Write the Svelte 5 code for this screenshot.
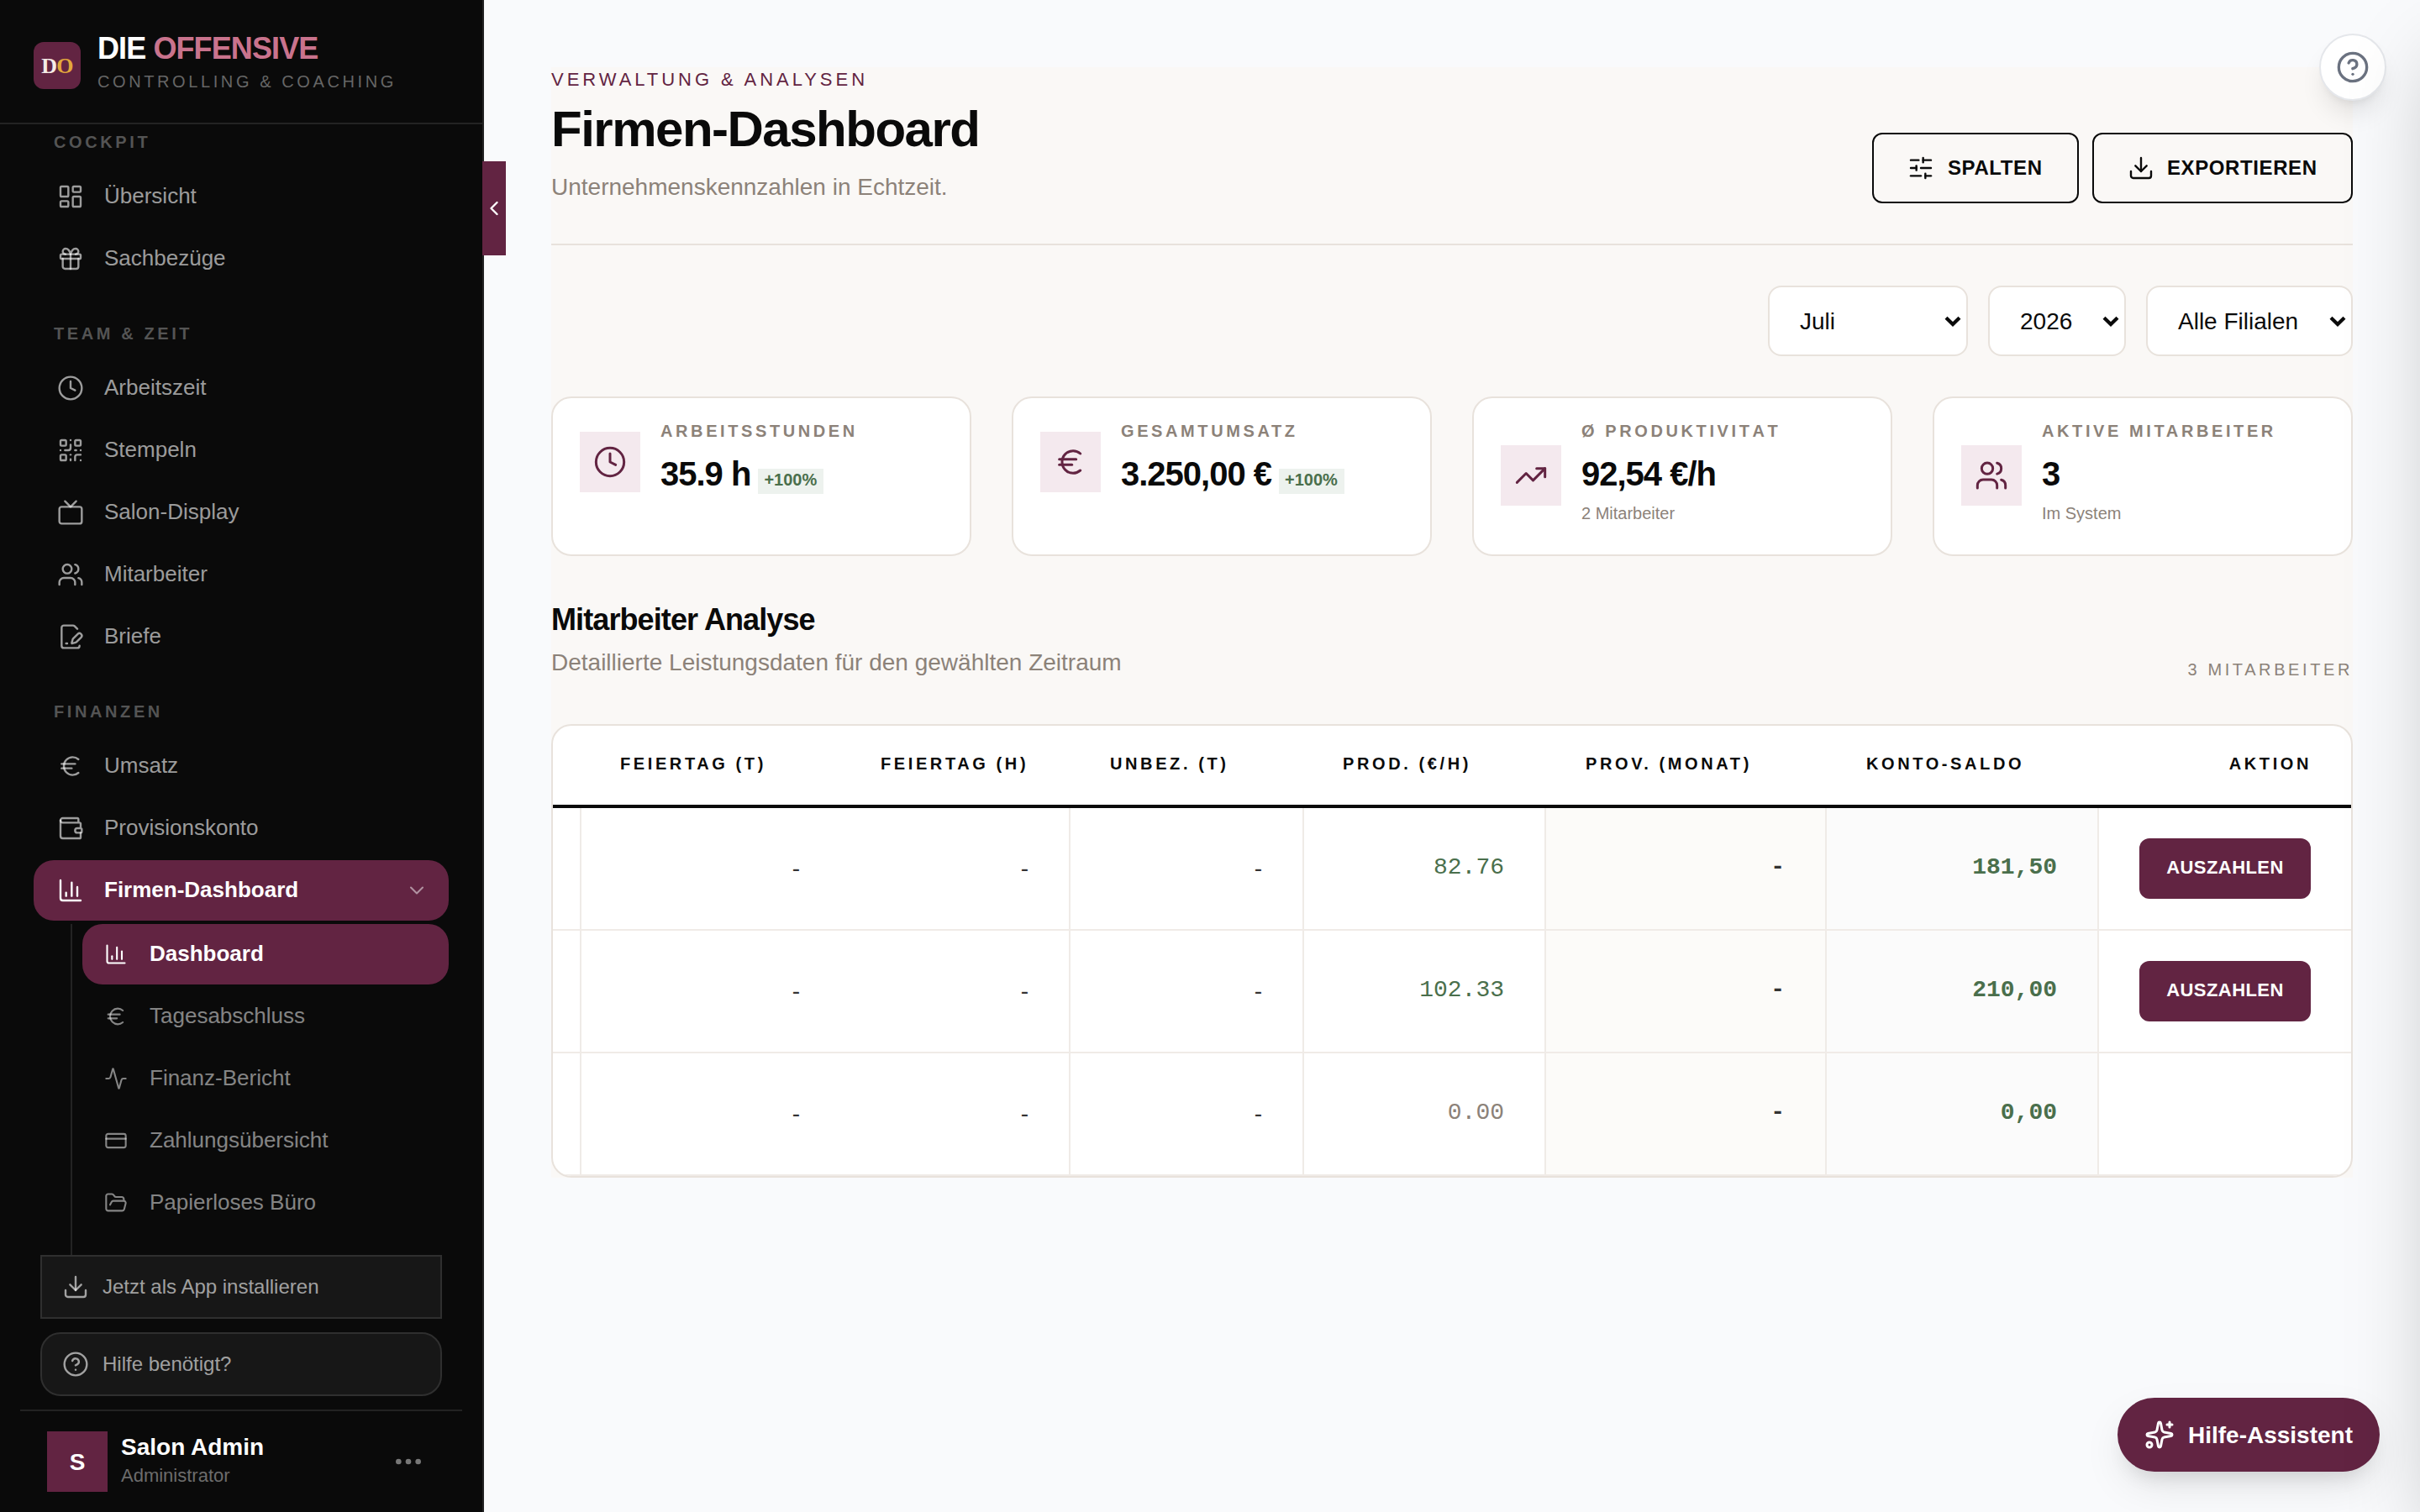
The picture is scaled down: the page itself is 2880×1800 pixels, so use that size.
<script>
  const icons = {
    dashboard: '<rect width="7" height="9" x="3" y="3" rx="1"/><rect width="7" height="5" x="14" y="3" rx="1"/><rect width="7" height="9" x="14" y="12" rx="1"/><rect width="7" height="5" x="3" y="16" rx="1"/>',
    gift: '<rect x="3" y="8" width="18" height="4" rx="1"/><path d="M12 8v13"/><path d="M19 12v7a2 2 0 0 1-2 2H7a2 2 0 0 1-2-2v-7"/><path d="M7.5 8a2.5 2.5 0 0 1 0-5A4.8 8 0 0 1 12 8a4.8 8 0 0 1 4.5-5 2.5 2.5 0 0 1 0 5"/>',
    clock: '<circle cx="12" cy="12" r="10"/><path d="M12 6v6l4 2"/>',
    qr: '<rect width="5" height="5" x="3" y="3" rx="1"/><rect width="5" height="5" x="16" y="3" rx="1"/><rect width="5" height="5" x="3" y="16" rx="1"/><path d="M21 16h-3a2 2 0 0 0-2 2v3"/><path d="M21 21v.01"/><path d="M12 7v3a2 2 0 0 1-2 2H7"/><path d="M3 12h.01"/><path d="M12 3h.01"/><path d="M12 16v.01"/><path d="M16 12h1"/><path d="M21 12v.01"/><path d="M12 21v-1"/>',
    tv: '<rect width="20" height="15" x="2" y="7" rx="2"/><path d="m17 2-5 5-5-5"/>',
    users: '<path d="M16 21v-2a4 4 0 0 0-4-4H6a4 4 0 0 0-4 4v2"/><path d="M16 3.128a4 4 0 0 1 0 7.744"/><path d="M22 21v-2a4 4 0 0 0-3-3.87"/><circle cx="9" cy="7" r="4"/>',
    letter: '<path d="m18 5-2.414-2.414A2 2 0 0 0 14.172 2H6a2 2 0 0 0-2 2v16a2 2 0 0 0 2 2h12a2 2 0 0 0 2-2"/><path d="M21.378 12.626a1 1 0 0 0-3.004-3.004l-4.01 4.012a2 2 0 0 0-.506.854l-.837 2.87a.5.5 0 0 0 .62.62l2.87-.837a2 2 0 0 0 .854-.506z"/><path d="M8 18h1"/>',
    euro: '<path d="M4 10h12"/><path d="M4 14h9"/><path d="M19 6a7.7 7.7 0 0 0-5.2-2A7.9 7.9 0 0 0 6 12c0 4.4 3.5 8 7.8 8 2 0 3.8-.8 5.2-2"/>',
    wallet: '<path d="M19 7V4a1 1 0 0 0-1-1H5a2 2 0 0 0 0 4h15a1 1 0 0 1 1 1v4h-3a2 2 0 0 0 0 4h3a1 1 0 0 0 1-1v-2a1 1 0 0 0-1-1"/><path d="M3 5v14a2 2 0 0 0 2 2h15a1 1 0 0 0 1-1v-4"/>',
    chart: '<path d="M3 3v16a2 2 0 0 0 2 2h16"/><path d="M18 17V9"/><path d="M13 17V5"/><path d="M8 17v-3"/>',
    activity: '<path d="M22 12h-2.48a2 2 0 0 0-1.93 1.46l-2.35 8.36a.25.25 0 0 1-.48 0L9.24 2.18a.25.25 0 0 0-.48 0l-2.35 8.36A2 2 0 0 1 4.49 12H2"/>',
    card: '<rect width="20" height="14" x="2" y="5" rx="2"/><path d="M2 10h20"/>',
    folder: '<path d="m6 14 1.5-2.9A2 2 0 0 1 9.24 10H20a2 2 0 0 1 1.94 2.5l-1.54 6a2 2 0 0 1-1.95 1.5H4a2 2 0 0 1-2-2V5a2 2 0 0 1 2-2h3.9a2 2 0 0 1 1.69.9l.81 1.2a2 2 0 0 0 1.67.9H18a2 2 0 0 1 2 2v2"/>',
    download: '<path d="M12 15V3"/><path d="M21 15v4a2 2 0 0 1-2 2H5a2 2 0 0 1-2-2v-4"/><path d="m7 10 5 5 5-5"/>',
    help: '<circle cx="12" cy="12" r="10"/><path d="M9.09 9a3 3 0 0 1 5.83 1c0 2-3 3-3 3"/><path d="M12 17h.01"/>',
    dots: '<circle cx="12" cy="12" r="1"/><circle cx="19" cy="12" r="1"/><circle cx="5" cy="12" r="1"/>',
    sliders: '<path d="M10 5H3"/><path d="M12 19H3"/><path d="M14 3v4"/><path d="M16 17v4"/><path d="M21 12h-9"/><path d="M21 19h-5"/><path d="M21 5h-7"/><path d="M8 10v4"/><path d="M8 12H3"/>',
    trend: '<path d="M16 7h6v6"/><path d="m22 7-8.5 8.5-5-5L2 17"/>',
    sparkles: '<path d="M11.017 2.814a1 1 0 0 1 1.966 0l1.051 5.558a2 2 0 0 0 1.594 1.594l5.558 1.051a1 1 0 0 1 0 1.966l-5.558 1.051a2 2 0 0 0-1.594 1.594l-1.051 5.558a1 1 0 0 1-1.966 0l-1.051-5.558a2 2 0 0 0-1.594-1.594l-5.558-1.051a1 1 0 0 1 0-1.966l5.558-1.051a2 2 0 0 0 1.594-1.594z"/><path d="M20 2v4"/><path d="M22 4h-4"/><circle cx="4" cy="20" r="2"/>',
    left: '<path d="m15 18-6-6 6-6"/>',
    down: '<path d="m6 9 6 6 6-6"/>'
  };

  const sections = [
    { title: 'COCKPIT', items: [['dashboard', 'Übersicht'], ['gift', 'Sachbezüge']] },
    {
      title: 'TEAM & ZEIT',
      items: [['clock', 'Arbeitszeit'], ['qr', 'Stempeln'], ['tv', 'Salon-Display'], ['users', 'Mitarbeiter'], ['letter', 'Briefe']]
    },
    { title: 'FINANZEN', items: [['euro', 'Umsatz'], ['wallet', 'Provisionskonto'], ['chart', 'Firmen-Dashboard', true]] }
  ];

  const subItems = [
    ['chart', 'Dashboard', true],
    ['euro', 'Tagesabschluss'],
    ['activity', 'Finanz-Bericht'],
    ['card', 'Zahlungsübersicht'],
    ['folder', 'Papierloses Büro']
  ];

  const filters = [['Juli', 'month'], ['2026', 'year'], ['Alle Filialen', 'branch']];

  const kpis = [
    { icon: 'clock', label: 'ARBEITSSTUNDEN', value: '35.9 h', badge: '+100%' },
    { icon: 'euro', label: 'GESAMTUMSATZ', value: '3.250,00 €', badge: '+100%' },
    { icon: 'trend', label: 'Ø PRODUKTIVITAT', value: '92,54 €/h', note: '2 Mitarbeiter', loose: true },
    { icon: 'users', label: 'AKTIVE MITARBEITER', value: '3', note: 'Im System' }
  ];

  const columns = ['', 'FEIERTAG (T)', 'FEIERTAG (H)', 'UNBEZ. (T)', 'PROD. (€/H)', 'PROV. (MONAT)', 'KONTO-SALDO', 'AKTION'];

  const rows = [
    { prod: '82.76', saldo: '181,50', pay: true },
    { prod: '102.33', saldo: '210,00', pay: true },
    { prod: '0.00', saldo: '0,00', pay: false }
  ];
</script>

{#snippet icon(name, size, stroke = 1.8)}
  <svg width={size} height={size} viewBox="0 0 24 24" fill="none" stroke="currentColor" stroke-width={stroke} stroke-linecap="round" stroke-linejoin="round" aria-hidden="true">{@html icons[name]}</svg>
{/snippet}

<div class="app">
  <aside class="sidebar">
    <div class="brand">
      <div class="logo"><span>D</span><span class="gold">O</span></div>
      <div class="brand-text">
        <div class="brand-name">DIE <span>OFFENSIVE</span></div>
        <div class="brand-sub">CONTROLLING &amp; COACHING</div>
      </div>
    </div>

    <nav class="nav">
      {#each sections as section}
        <div class="nav-title">{section.title}</div>
        <div class="nav-list">
          {#each section.items as [name, label, active]}
            <a class="nav-item" class:active>
              {@render icon(name, 32)}
              <span>{label}</span>
              {#if active}<i class="chev">{@render icon('down', 28)}</i>{/if}
            </a>
          {/each}
        </div>
      {/each}
      <div class="sub">
        {#each subItems as [name, label, active]}
          <a class="nav-item small" class:active>
            {@render icon(name, 28)}
            <span>{label}</span>
          </a>
        {/each}
      </div>
    </nav>

    <div class="side-foot">
      <button class="side-btn">{@render icon('download', 32)}<span>Jetzt als App installieren</span></button>
      <button class="side-btn round">{@render icon('help', 32)}<span>Hilfe benötigt?</span></button>
    </div>
    <div class="user">
      <div class="avatar">S</div>
      <div class="user-text">
        <div class="user-name">Salon Admin</div>
        <div class="user-role">Administrator</div>
      </div>
      <i class="more">{@render icon('dots', 40, 2)}</i>
    </div>
    <button class="collapse" aria-label="Einklappen">{@render icon('left', 28, 2)}</button>
  </aside>

  <main class="main">
    <div class="page">
      <header class="head">
        <div class="head-text">
          <div class="eyebrow">VERWALTUNG &amp; ANALYSEN</div>
          <h1>Firmen-Dashboard</h1>
          <p>Unternehmenskennzahlen in Echtzeit.</p>
        </div>
        <div class="actions">
          <button class="btn columns">{@render icon('sliders', 32)}<span>SPALTEN</span></button>
          <button class="btn export">{@render icon('download', 32)}<span>EXPORTIEREN</span></button>
        </div>
      </header>

      <div class="filters">
        {#each filters as [label, kind]}
          <div class="select {kind}">
            <span>{label}</span>
            <svg width="20" height="13" viewBox="0 0 20 13" fill="none" stroke="#0a0a0a" stroke-width="4.2"><path d="M2 2.2 10 10l8-7.8" /></svg>
          </div>
        {/each}
      </div>

      <div class="kpis">
        {#each kpis as k}
          <div class="kpi">
            <div class="kpi-inner">
              <div class="kpi-icon">{@render icon(k.icon, 40)}</div>
              <div class="kpi-body">
                <div class="kpi-label" class:loose={k.loose}>{k.label}</div>
                <div class="kpi-value"><span>{k.value}</span>{#if k.badge}<em>{k.badge}</em>{/if}</div>
                {#if k.note}<div class="kpi-note">{k.note}</div>{/if}
              </div>
            </div>
          </div>
        {/each}
      </div>

      <div class="section-head">
        <div>
          <h2>Mitarbeiter Analyse</h2>
          <p>Detaillierte Leistungsdaten für den gewählten Zeitraum</p>
        </div>
        <div class="count">3 MITARBEITER</div>
      </div>

      <div class="table">
        <div class="tr th">
          {#each columns as c}<div>{c}</div>{/each}
        </div>
        {#each rows as r}
          <div class="tr td">
            <div></div>
            <div class="line">-</div>
            <div>-</div>
            <div class="line">-</div>
            <div class="line mono" class:green={r.pay} class:zero={!r.pay}>{r.prod}</div>
            <div class="line mono bold prov">-</div>
            <div class="line mono bold green saldo">{r.saldo}</div>
            <div class="line action">{#if r.pay}<button class="pay">AUSZAHLEN</button>{/if}</div>
          </div>
        {/each}
      </div>
    </div>
  </main>

  <button class="help-fab" aria-label="Hilfe">{@render icon('help', 40, 2)}</button>
  <button class="assistant">{@render icon('sparkles', 36, 2)}<span>Hilfe-Assistent</span></button>
  <div class="drawer-shadow"></div>
</div>

<style>
  :global(body) {
    margin: 0;
    background: #f9fafc;
  }
  .app,
  .app * {
    box-sizing: border-box;
  }
  .app {
    position: relative;
    display: flex;
    width: 2880px;
    height: 1800px;
    overflow: hidden;
    background: #f9fafc;
    font-family: 'Liberation Sans', Arial, sans-serif;
    color: #0a0a0a;
  }
  button {
    font: inherit;
    margin: 0;
    padding: 0;
    border: 0;
    cursor: pointer;
  }
  svg {
    display: block;
    flex: none;
  }
  h1,
  h2,
  p {
    margin: 0;
  }

  /* Sidebar */
  .sidebar {
    position: relative;
    display: flex;
    flex-direction: column;
    flex: none;
    width: 576px;
    height: 1800px;
    background: #0a0a0a;
    border-right: 2px solid #232323;
  }
  .brand {
    display: flex;
    align-items: flex-start;
    gap: 20px;
    height: 148px;
    padding: 37px 40px 0;
    border-bottom: 2px solid #232323;
  }
  .logo {
    display: flex;
    align-items: center;
    justify-content: center;
    width: 56px;
    height: 56px;
    margin-top: 13px;
    padding-top: 1px;
    border-radius: 12px;
    background: #622442;
    color: #f5ebe6;
    font: bold 26px/30px 'Liberation Serif', serif;
    letter-spacing: -0.8px;
  }
  .gold {
    color: #e2a83c;
  }
  .brand-name {
    font-size: 36px;
    line-height: 41px;
    font-weight: 700;
    letter-spacing: -0.025em;
    color: #fff;
  }
  .brand-name span {
    color: #c9738d;
  }
  .brand-sub {
    margin-top: 8px;
    font-size: 20px;
    line-height: 22px;
    letter-spacing: 0.18em;
    color: #666;
    white-space: nowrap;
  }
  .nav {
    flex: 1;
    min-height: 0;
    overflow: hidden;
    padding: 10px 40px 0;
  }
  .nav-title {
    padding-left: 24px;
    margin-bottom: 18px;
    font-size: 20px;
    line-height: 22px;
    font-weight: 700;
    letter-spacing: 0.18em;
    color: #545454;
  }
  .nav-list + .nav-title {
    margin-top: 42px;
  }
  .nav-list,
  .sub {
    display: flex;
    flex-direction: column;
    gap: 2px;
  }
  .nav-item {
    display: flex;
    align-items: center;
    gap: 24px;
    height: 72px;
    padding: 0 24px 0 28px;
    border-radius: 24px;
    font-size: 26px;
    line-height: 30px;
    color: rgba(255, 255, 255, 0.6);
  }
  .nav-item span {
    flex: 1;
    padding-bottom: 2px;
  }
  .nav-item.small {
    gap: 26px;
    padding-left: 26px;
    color: rgba(255, 255, 255, 0.5);
  }
  .nav-item.active {
    background: #622442;
    color: #fff;
    font-weight: 700;
  }
  .chev {
    opacity: 0.5;
  }
  .sub {
    height: 420px;
    margin: 4px 0 0 44px;
    padding-left: 12px;
    border-left: 2px solid #232323;
  }
  .side-foot {
    display: flex;
    flex-direction: column;
    gap: 16px;
    padding: 0 48px 16px;
  }
  .side-btn {
    display: flex;
    align-items: center;
    gap: 16px;
    height: 76px;
    padding: 0 24px;
    border: 2px solid #2f2f2f;
    background: #171717;
    font-size: 24px;
    line-height: 27px;
    color: rgba(255, 255, 255, 0.6);
  }
  .side-btn span {
    padding-bottom: 1px;
  }
  .side-btn.round {
    border-radius: 24px;
  }
  .user {
    display: flex;
    align-items: center;
    height: 122px;
    margin: 0 24px;
    padding: 0 44px 0 32px;
    border-top: 2px solid #232323;
  }
  .avatar {
    display: flex;
    align-items: center;
    justify-content: center;
    width: 72px;
    height: 72px;
    margin-right: 16px;
    background: #622442;
    color: #fff;
    font-size: 28px;
    line-height: 31px;
    font-weight: 700;
  }
  .user-text {
    flex: 1;
    padding-bottom: 4px;
  }
  .user-name {
    font-size: 28px;
    line-height: 31px;
    font-weight: 700;
    color: #fff;
  }
  .user-role {
    margin-top: 6px;
    font-size: 22px;
    line-height: 25px;
    color: #6c6c6c;
  }
  .more {
    color: #777;
  }
  .collapse {
    position: absolute;
    left: 574px;
    top: 192px;
    display: flex;
    align-items: center;
    justify-content: center;
    width: 28px;
    height: 112px;
    background: #622442;
    color: #fff;
  }

  /* Content */
  .main {
    flex: 1;
    padding: 80px;
  }
  .page {
    background: #faf8f6;
  }
  .head {
    display: flex;
    align-items: flex-end;
    justify-content: space-between;
    height: 212px;
    padding-bottom: 48px;
    border-bottom: 2px solid #e8e2dc;
  }
  .head-text {
    padding-bottom: 4px;
  }
  .eyebrow {
    font-size: 22px;
    line-height: 25px;
    letter-spacing: 0.18em;
    color: #622442;
  }
  h1 {
    margin-top: 13px;
    font-size: 60px;
    line-height: 67px;
    font-weight: 700;
    letter-spacing: -0.025em;
  }
  .head p,
  .section-head p {
    font-size: 28px;
    line-height: 31px;
    color: #8c8279;
  }
  .head p {
    margin-top: 20px;
  }
  .actions {
    display: flex;
    gap: 16px;
  }
  .btn {
    display: flex;
    align-items: center;
    gap: 15px;
    height: 84px;
    padding: 0 0 0 40px;
    border: 2px solid #0a0a0a;
    border-radius: 12px;
    background: transparent;
    font-size: 24px;
    line-height: 27px;
    font-weight: 700;
    letter-spacing: 0.025em;
    color: #0a0a0a;
  }
  .btn span {
    padding-bottom: 1px;
  }
  .columns {
    width: 246px;
    gap: 16px;
  }
  .export {
    width: 310px;
  }
  .filters {
    display: flex;
    justify-content: flex-end;
    gap: 24px;
    padding: 48px 0;
  }
  .select {
    display: flex;
    align-items: center;
    justify-content: space-between;
    height: 84px;
    padding: 0 6px 0 36px;
    border: 2px solid #e8e2dc;
    border-radius: 16px;
    background: #fff;
    font-size: 28px;
    line-height: 31px;
  }
  .month {
    width: 238px;
  }
  .year {
    width: 164px;
  }
  .branch {
    width: 246px;
  }
  .kpis {
    display: grid;
    grid-template-columns: repeat(4, 1fr);
    gap: 48px;
  }
  .kpi {
    height: 190px;
    padding: 28px 32px;
    border: 2px solid #e8e2dc;
    border-radius: 24px;
    background: #fff;
  }
  .kpi-inner {
    display: flex;
    align-items: center;
    gap: 24px;
  }
  .kpi-icon {
    display: flex;
    align-items: center;
    justify-content: center;
    flex: none;
    width: 72px;
    height: 72px;
    background: #f4e9ee;
    color: #622442;
  }
  .kpi-body {
    white-space: nowrap;
  }
  .kpi-label {
    font-size: 20px;
    line-height: 22px;
    font-weight: 700;
    letter-spacing: 0.18em;
    color: #8c8279;
  }
  .kpi-label.loose {
    font-kerning: none;
  }
  .kpi-value {
    display: flex;
    align-items: baseline;
    gap: 9px;
    height: 48px;
    margin: 16px 0 10px;
    font-size: 40px;
    line-height: 48px;
    font-weight: 700;
    letter-spacing: -0.025em;
  }
  .kpi-value em {
    padding: 1px 8px 5px 7px;
    background: #edf2ee;
    font-size: 20px;
    line-height: 24px;
    font-style: normal;
    letter-spacing: 0;
    color: #4a6f4c;
  }
  .kpi-note {
    height: 32px;
    font-size: 20px;
    line-height: 26px;
    color: #8c8279;
  }
  .section-head {
    display: flex;
    align-items: flex-end;
    justify-content: space-between;
    height: 200px;
    padding-bottom: 52px;
  }
  h2 {
    font-size: 36px;
    line-height: 41px;
    font-weight: 700;
    letter-spacing: -0.025em;
  }
  .section-head p {
    margin-top: 15px;
    padding-bottom: 6px;
  }
  .count {
    font-size: 20px;
    line-height: 22px;
    padding-bottom: 2px;
    letter-spacing: 0.18em;
    color: #8c8279;
  }

  /* Table */
  .table {
    overflow: hidden;
    border: 2px solid #e8e2dc;
    border-radius: 24px;
    background: #fff;
  }
  .tr {
    display: grid;
    grid-template-columns: 32px 310px 272px 278px 288px 334px 324px 302px;
  }
  .th {
    height: 98px;
    border-bottom: 4px solid #0a0a0a;
    font-size: 20px;
    line-height: 22px;
    font-weight: 700;
    letter-spacing: 0.18em;
    white-space: nowrap;
  }
  .th > div {
    padding: 34px 47px 0 48px;
  }
  .th > div:nth-child(4),
  .th > div:nth-child(6),
  .th > div:nth-child(7) {
    padding-left: 49px;
  }
  .th > div:last-child {
    text-align: right;
  }
  .td {
    height: 146px;
    border-bottom: 2px solid #f0ebe7;
    font-size: 28px;
    line-height: 31px;
    color: #333;
  }
  .td > div {
    display: flex;
    align-items: center;
    justify-content: flex-end;
    padding: 0 48px 1px 0;
  }
  .td > .line {
    border-left: 2px solid #efebe7;
  }
  .td > .mono {
    padding-bottom: 4px;
    font-family: 'Liberation Mono', monospace;
  }
  .td > .action {
    padding-bottom: 0;
  }
  .bold {
    font-weight: 700;
  }
  .green {
    color: #4a6f4c;
  }
  .zero {
    color: #8c8279;
  }
  .prov {
    background: #fcfbf9;
  }
  .saldo {
    background: #fbfbfb;
  }
  .pay {
    width: 204px;
    height: 72px;
    padding-bottom: 3px;
    border-radius: 12px;
    background: #622442;
    font-size: 22px;
    line-height: 25px;
    font-weight: 700;
    letter-spacing: 0.02em;
    color: #fff;
  }

  /* Floating controls */
  .help-fab {
    position: absolute;
    top: 40px;
    right: 40px;
    display: flex;
    align-items: center;
    justify-content: center;
    width: 80px;
    height: 80px;
    border: 2px solid #e5e7eb;
    border-radius: 50%;
    background: #fff;
    color: #6b7280;
    box-shadow: 0 20px 30px -6px rgba(0, 0, 0, 0.1), 0 8px 12px -8px rgba(0, 0, 0, 0.1);
  }
  .assistant {
    position: absolute;
    right: 48px;
    bottom: 48px;
    display: flex;
    align-items: center;
    gap: 16px;
    height: 88px;
    padding: 0 32px;
    border-radius: 44px;
    background: #622442;
    color: #fff;
    font-size: 28px;
    line-height: 31px;
    font-weight: 700;
    box-shadow: 0 20px 50px -6px rgba(0, 0, 0, 0.1), 0 16px 24px -12px rgba(0, 0, 0, 0.12);
  }
  .drawer-shadow {
    position: absolute;
    top: 0;
    left: 100%;
    width: 800px;
    height: 1800px;
    box-shadow: 0 50px 100px -24px rgba(0, 0, 0, 0.25);
  }
</style>
